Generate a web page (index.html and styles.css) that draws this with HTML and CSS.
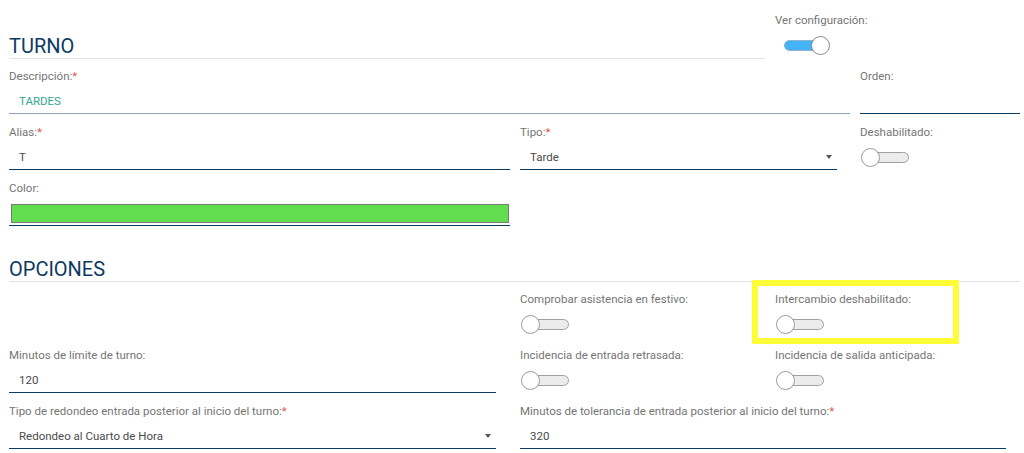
FILE: index.html
```html
<!DOCTYPE html>
<html lang="es">
<head>
  <meta charset="UTF-8">
  <meta name="viewport" content="width=device-width, initial-scale=1.0">
  <title>Turno</title>
  <link rel="stylesheet" href="styles.css">
</head>
<body>
  <div class="form">
    <div class="row">
      <div class="cell span-2 pr-10 bottom">
        <h2 class="section-title">TURNO</h2>
      </div>
      <div class="cell span-2">
        <div class="field">
          <label class="label">Ver configuración:</label>
          <div class="control plain">
            <span class="switch on"><span class="track"></span><span class="knob"></span></span>
          </div>
        </div>
      </div>
    </div>

    <div class="row">
      <div class="cell span-3 pr-10">
        <div class="field">
          <label class="label">Descripción:<span class="req">*</span></label>
          <div class="control light"><span class="value teal">TARDES</span></div>
        </div>
      </div>
      <div class="cell pr-4">
        <div class="field">
          <label class="label">Orden:</label>
          <div class="control"></div>
        </div>
      </div>
    </div>

    <div class="row">
      <div class="cell pr-10">
        <div class="field">
          <label class="label">Alias:<span class="req">*</span></label>
          <div class="control"><span class="value">T</span></div>
        </div>
      </div>
      <div class="cell span-2 pr-23">
        <div class="field">
          <label class="label">Tipo:<span class="req">*</span></label>
          <div class="control select"><span class="value">Tarde</span><span class="caret"></span></div>
        </div>
      </div>
      <div class="cell">
        <div class="field">
          <label class="label">Deshabilitado:</label>
          <div class="control plain">
            <span class="switch"><span class="track"></span><span class="knob"></span></span>
          </div>
        </div>
      </div>
    </div>

    <div class="row">
      <div class="cell pr-10">
        <div class="field">
          <label class="label">Color:</label>
          <div class="control swatch-wrap"><span class="swatch"></span></div>
        </div>
      </div>
    </div>

    <div class="row section">
      <div class="cell span-4 pr-4">
        <h2 class="section-title">OPCIONES</h2>
      </div>
    </div>

    <div class="row">
      <div class="cell"></div>
      <div class="cell">
        <div class="field">
          <label class="label">Comprobar asistencia en festivo:</label>
          <div class="control plain">
            <span class="switch"><span class="track"></span><span class="knob"></span></span>
          </div>
        </div>
      </div>
      <div class="cell span-2">
        <div class="field marked">
          <label class="label">Intercambio deshabilitado:</label>
          <div class="control plain">
            <span class="switch"><span class="track"></span><span class="knob"></span></span>
          </div>
        </div>
      </div>
    </div>

    <div class="row">
      <div class="cell pr-24">
        <div class="field">
          <label class="label">Minutos de límite de turno:</label>
          <div class="control"><span class="value">120</span></div>
        </div>
      </div>
      <div class="cell">
        <div class="field">
          <label class="label">Incidencia de entrada retrasada:</label>
          <div class="control plain">
            <span class="switch"><span class="track"></span><span class="knob"></span></span>
          </div>
        </div>
      </div>
      <div class="cell span-2">
        <div class="field">
          <label class="label">Incidencia de salida anticipada:</label>
          <div class="control plain">
            <span class="switch"><span class="track"></span><span class="knob"></span></span>
          </div>
        </div>
      </div>
    </div>

    <div class="row">
      <div class="cell pr-24">
        <div class="field">
          <label class="label">Tipo de redondeo entrada posterior al inicio del turno:<span class="req">*</span></label>
          <div class="control select"><span class="value">Redondeo al Cuarto de Hora</span><span class="caret"></span></div>
        </div>
      </div>
      <div class="cell span-3 pr-18">
        <div class="field">
          <label class="label">Minutos de tolerancia de entrada posterior al inicio del turno:<span class="req">*</span></label>
          <div class="control"><span class="value">320</span></div>
        </div>
      </div>
    </div>
  </div>
</body>
</html>
```

FILE: styles.css
```css
body {
  margin: 0;
  padding: 0;
  background: #fff;
  font-family: Roboto, 'Liberation Sans', Arial, sans-serif;
  color: #444;
  overflow: hidden;
}

.form {
  padding: 11px 0 0 9px;
}

.row {
  display: grid;
  grid-template-columns: 511px 255px 85px 164px;
}

.cell {
  min-width: 0;
}

.span-2 { grid-column: span 2; }
.span-3 { grid-column: span 3; }
.span-4 { grid-column: span 4; }

.pr-4 { padding-right: 4px; }
.pr-10 { padding-right: 10px; }
.pr-18 { padding-right: 18px; }
.pr-23 { padding-right: 23px; }
.pr-24 { padding-right: 24px; }

.bottom {
  display: flex;
  align-items: flex-end;
  padding-bottom: 8px;
}

.section-title {
  flex: 1;
  margin: 0;
  font-size: 20px;
  font-weight: 400;
  line-height: 24px;
  color: #0c3a63;
  border-bottom: 1px solid #e2e2e2;
}

.section {
  margin-top: 22px;
  margin-bottom: 8px;
}

.field {
  position: relative;
  margin-bottom: 9px;
}

.label {
  display: block;
  height: 18px;
  line-height: 18px;
  font-size: 11.5px;
  color: #757575;
  margin-bottom: 4px;
  white-space: nowrap;
}

.req {
  color: #e8534f;
}

.control {
  height: 24px;
  display: flex;
  align-items: center;
  padding-left: 10px;
  border-bottom: 1px solid #0d3b63;
}

.control.light {
  border-bottom-color: #91a3bf;
}

.control.plain {
  padding-left: 0;
  border-bottom: 1px solid transparent;
}

.control.select {
  justify-content: space-between;
  padding-right: 5px;
}

.value {
  font-size: 11.5px;
  color: #4a4a4a;
}

.value.teal {
  color: #33a594;
}

.caret {
  width: 0;
  height: 0;
  border-left: 3.5px solid transparent;
  border-right: 3.5px solid transparent;
  border-top: 4px solid #555;
}

.swatch-wrap {
  padding: 0 1px 0 2px;
}

.swatch {
  flex: 1;
  height: 19px;
  background: #62dd4f;
  border: 1px solid #7a7a7a;
  box-sizing: border-box;
}

.switch {
  position: relative;
  display: inline-block;
  width: 51px;
  height: 19px;
  margin-left: 1px;
}

.switch .track {
  position: absolute;
  left: 4px;
  right: 3px;
  top: 4px;
  height: 11px;
  box-sizing: border-box;
  border: 1px solid #a0a0a0;
  border-radius: 6px;
  background: #ececec;
}

.switch .knob {
  position: absolute;
  left: 0;
  top: 0;
  width: 19px;
  height: 19px;
  box-sizing: border-box;
  border: 1px solid #9a9a9a;
  border-radius: 50%;
  background: #fff;
}

.switch.on {
  margin-left: 5px;
}

.switch.on .track {
  background: #45b4f6;
  border-color: #8fb4cc;
}

.switch.on .knob {
  left: 31px;
  border-color: #8a8a8a;
}

.marked::before {
  content: '';
  position: absolute;
  left: -23px;
  top: -10px;
  width: 207px;
  height: 64px;
  box-sizing: border-box;
  border: 6px solid #fdfd37;
  pointer-events: none;
}
```
